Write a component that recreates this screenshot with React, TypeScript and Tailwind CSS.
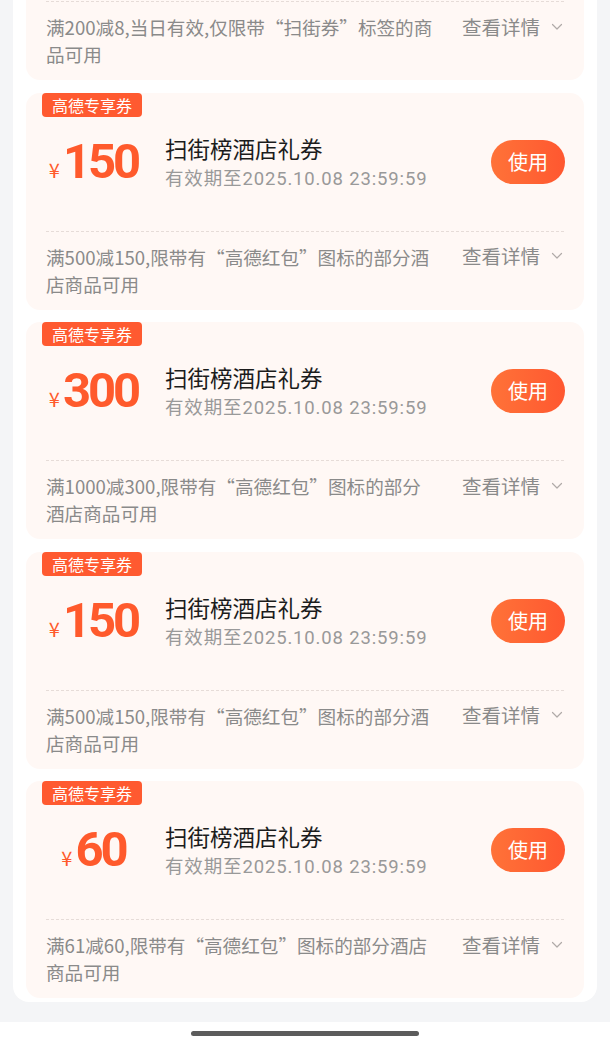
import React from "react";

const CJK = { fontFamily: '"Noto Sans CJK SC", "Noto Sans", sans-serif' };
const NUM = { fontFamily: 'Roboto, "Noto Sans CJK SC", sans-serif' };

function Chevron() {
  return (
    <svg width="12" height="8" viewBox="0 0 12 8" className="ml-[11px]">
      <polyline points="1.5,1.5 6,6 10.5,1.5" fill="none" stroke="#b0aaa8" strokeWidth="1.2" strokeLinecap="round" strokeLinejoin="round" />
    </svg>
  );
}

function Desc({ lines }: { lines: string[] }) {
  return (
    <div className="flex-1 flex flex-col">
      <div className="mx-[20px] border-t border-dashed border-[#e6dcd8]" />
      <div className="flex pl-[20px] pr-[21px] pt-[11px]">
        <div className="flex-1 flex flex-col text-[18.6px] leading-[27px] text-[#8a8a8a]">
          {lines.map((l, i) => (
            <span key={i} className="whitespace-nowrap">{l}</span>
          ))}
        </div>
        <div className="flex items-center h-[27px] text-[19.5px] text-[#8a8a8a] whitespace-nowrap">
          查看详情
          <Chevron />
        </div>
      </div>
    </div>
  );
}

function Coupon({ amount, lines }: { amount: string; lines: string[] }) {
  return (
    <div className="h-[217px] rounded-[14px] bg-[#fff8f5] flex flex-col">
      <div className="h-[138px] flex flex-col">
        <div className="ml-[16px] self-start h-[24px] px-[10px] rounded-[4px] bg-[#ff5a30] text-white text-[16px] leading-[24px]">
          高德专享券
        </div>
        <div className="mt-[15px] h-[60px] flex items-center">
          <div className="ml-[16px] w-[103px] flex items-baseline justify-center text-[#ff5a2c]">
            <span className="text-[20px] mr-[3px]" style={CJK}>¥</span>
            <span
              className="text-[49px] font-bold leading-[60px] tracking-[-3px]"
              style={{ fontFamily: 'Roboto, "Noto Sans", sans-serif' }}
            >
              {amount}
            </span>
          </div>
          <div className="ml-[20px] flex-1 flex flex-col">
            <span className="text-[22.5px] leading-[30px] text-[#1c1c1c]">扫街榜酒店礼券</span>
            <span className="mt-[4px] text-[18.5px] leading-[24px] text-[#999999] tracking-[0.85px]" style={NUM}>
              有效期至2025.10.08 23:59:59
            </span>
          </div>
          <div className="mr-[19px] w-[74px] h-[44px] rounded-full bg-linear-to-r from-[#ff7238] to-[#ff5730] flex items-center justify-center text-white text-[20px]">
            使用
          </div>
        </div>
      </div>
      <Desc lines={lines} />
    </div>
  );
}

export default function App() {
  return (
    <div className="w-[610px] h-[1046px] bg-[#f4f5f7] overflow-hidden flex flex-col" style={CJK}>
      <div className="flex-1">
        <div className="mx-[13px] bg-white rounded-b-[16px] px-[13px] pb-[4px] flex flex-col gap-[12.5px]">
          <div className="h-[80px] rounded-b-[14px] bg-[#fff8f5] flex flex-col pt-[1px]">
            <Desc lines={["满200减8,当日有效,仅限带“扫街券”标签的商", "品可用"]} />
          </div>
          <Coupon amount="150" lines={["满500减150,限带有“高德红包”图标的部分酒", "店商品可用"]} />
          <Coupon amount="300" lines={["满1000减300,限带有“高德红包”图标的部分", "酒店商品可用"]} />
          <Coupon amount="150" lines={["满500减150,限带有“高德红包”图标的部分酒", "店商品可用"]} />
          <Coupon amount="60" lines={["满61减60,限带有“高德红包”图标的部分酒店", "商品可用"]} />
        </div>
      </div>
      <div className="h-[24px] bg-white flex justify-center pt-[9px]">
        <div className="w-[228px] h-[5px] rounded-full bg-[#5c5c5c]" />
      </div>
    </div>
  );
}
